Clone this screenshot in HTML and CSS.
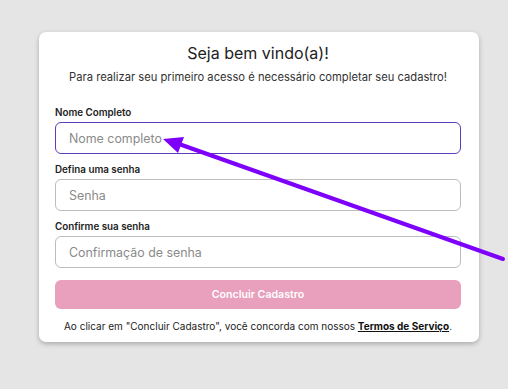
FILE: index.html
```html
<!DOCTYPE html>
<html lang="pt-BR">
  <head>
    <meta charset="UTF-8" />
    <meta name="viewport" content="width=device-width, initial-scale=1.0" />
    <title>Cadastro</title>
    <link rel="stylesheet" href="styles.css">
  </head>
  <body>
    <div class="card">
      <h1 class="title">Seja bem vindo(a)!</h1>
      <p class="subtitle">Para realizar seu primeiro acesso é necessário completar seu cadastro!</p>

      <form class="form">
        <div class="field">
          <label for="nome">Nome Completo</label>
          <input id="nome" class="input focused" type="text" placeholder="Nome completo" autofocus />
        </div>
        <div class="field">
          <label for="senha">Defina uma senha</label>
          <input id="senha" class="input" type="password" placeholder="Senha" />
        </div>
        <div class="field">
          <label for="confirma">Confirme sua senha</label>
          <input id="confirma" class="input" type="password" placeholder="Confirmação de senha" />
        </div>
        <button type="button" class="btn" disabled>Concluir Cadastro</button>
      </form>

      <p class="terms">Ao clicar em "Concluir Cadastro", você concorda com nossos <a href="#">Termos de Serviço</a>.</p>
    </div>

    <!-- seta de anotação -->
    <svg class="arrow" width="508" height="389" viewBox="0 0 508 389">
      <line x1="179" y1="144" x2="503" y2="259" stroke="#7d00fb" stroke-width="4" stroke-linecap="round" />
      <polygon points="163,139 184,137 178,153" fill="#7d00fb" />
    </svg>
  </body>
</html>
```

FILE: styles.css
```css
* {
  margin: 0;
  padding: 0;
  box-sizing: border-box;
}

body {
  background: #e5e5e5;
  font-family: Inter, "Liberation Sans", sans-serif;
  color: #222;
  position: relative;
  height: 389px;
  overflow: hidden;
}

.card {
  width: 440px;
  margin: 32px 0 0 39px;
  padding: 11px 18px 9px 16px;
  background: #fff;
  border-radius: 7px;
  box-shadow: 0 2px 5px rgba(0, 0, 0, 0.25);
}

.title {
  font-size: 16px;
  line-height: 20px;
  font-weight: 400;
  text-align: center;
  color: #222;
}

.subtitle {
  margin-top: 6px;
  font-size: 11.2px;
  line-height: 16px;
  text-align: center;
  color: #333;
}

.form {
  display: flex;
  flex-direction: column;
  gap: 9px;
  margin-top: 21px;
}

.field {
  display: flex;
  flex-direction: column;
  gap: 2px;
}

.field label {
  font-size: 9.8px;
  line-height: 14px;
  font-weight: 600;
  color: #222;
}

.input {
  height: 32px;
  padding: 0 13px;
  border: 1px solid #bdbdbd;
  border-radius: 6px;
  font-family: inherit;
  font-size: 12.4px;
  color: #333;
  outline: none;
  caret-color: #222;
}

.input::placeholder {
  color: #8a8a8a;
}

.input.focused {
  border-color: #5e3bb8;
}

.btn {
  margin-top: 3px;
  height: 29px;
  border: none;
  border-radius: 6px;
  background: #e8a0bc;
  color: #fff;
  font-family: inherit;
  font-size: 10.6px;
  font-weight: 600;
}

.terms {
  margin-top: 10px;
  font-size: 10px;
  line-height: 14px;
  text-align: center;
  color: #222;
  white-space: nowrap;
}

.terms a {
  color: #111;
  font-weight: 700;
}

.arrow {
  position: absolute;
  top: 0;
  left: 0;
  pointer-events: none;
}
```
